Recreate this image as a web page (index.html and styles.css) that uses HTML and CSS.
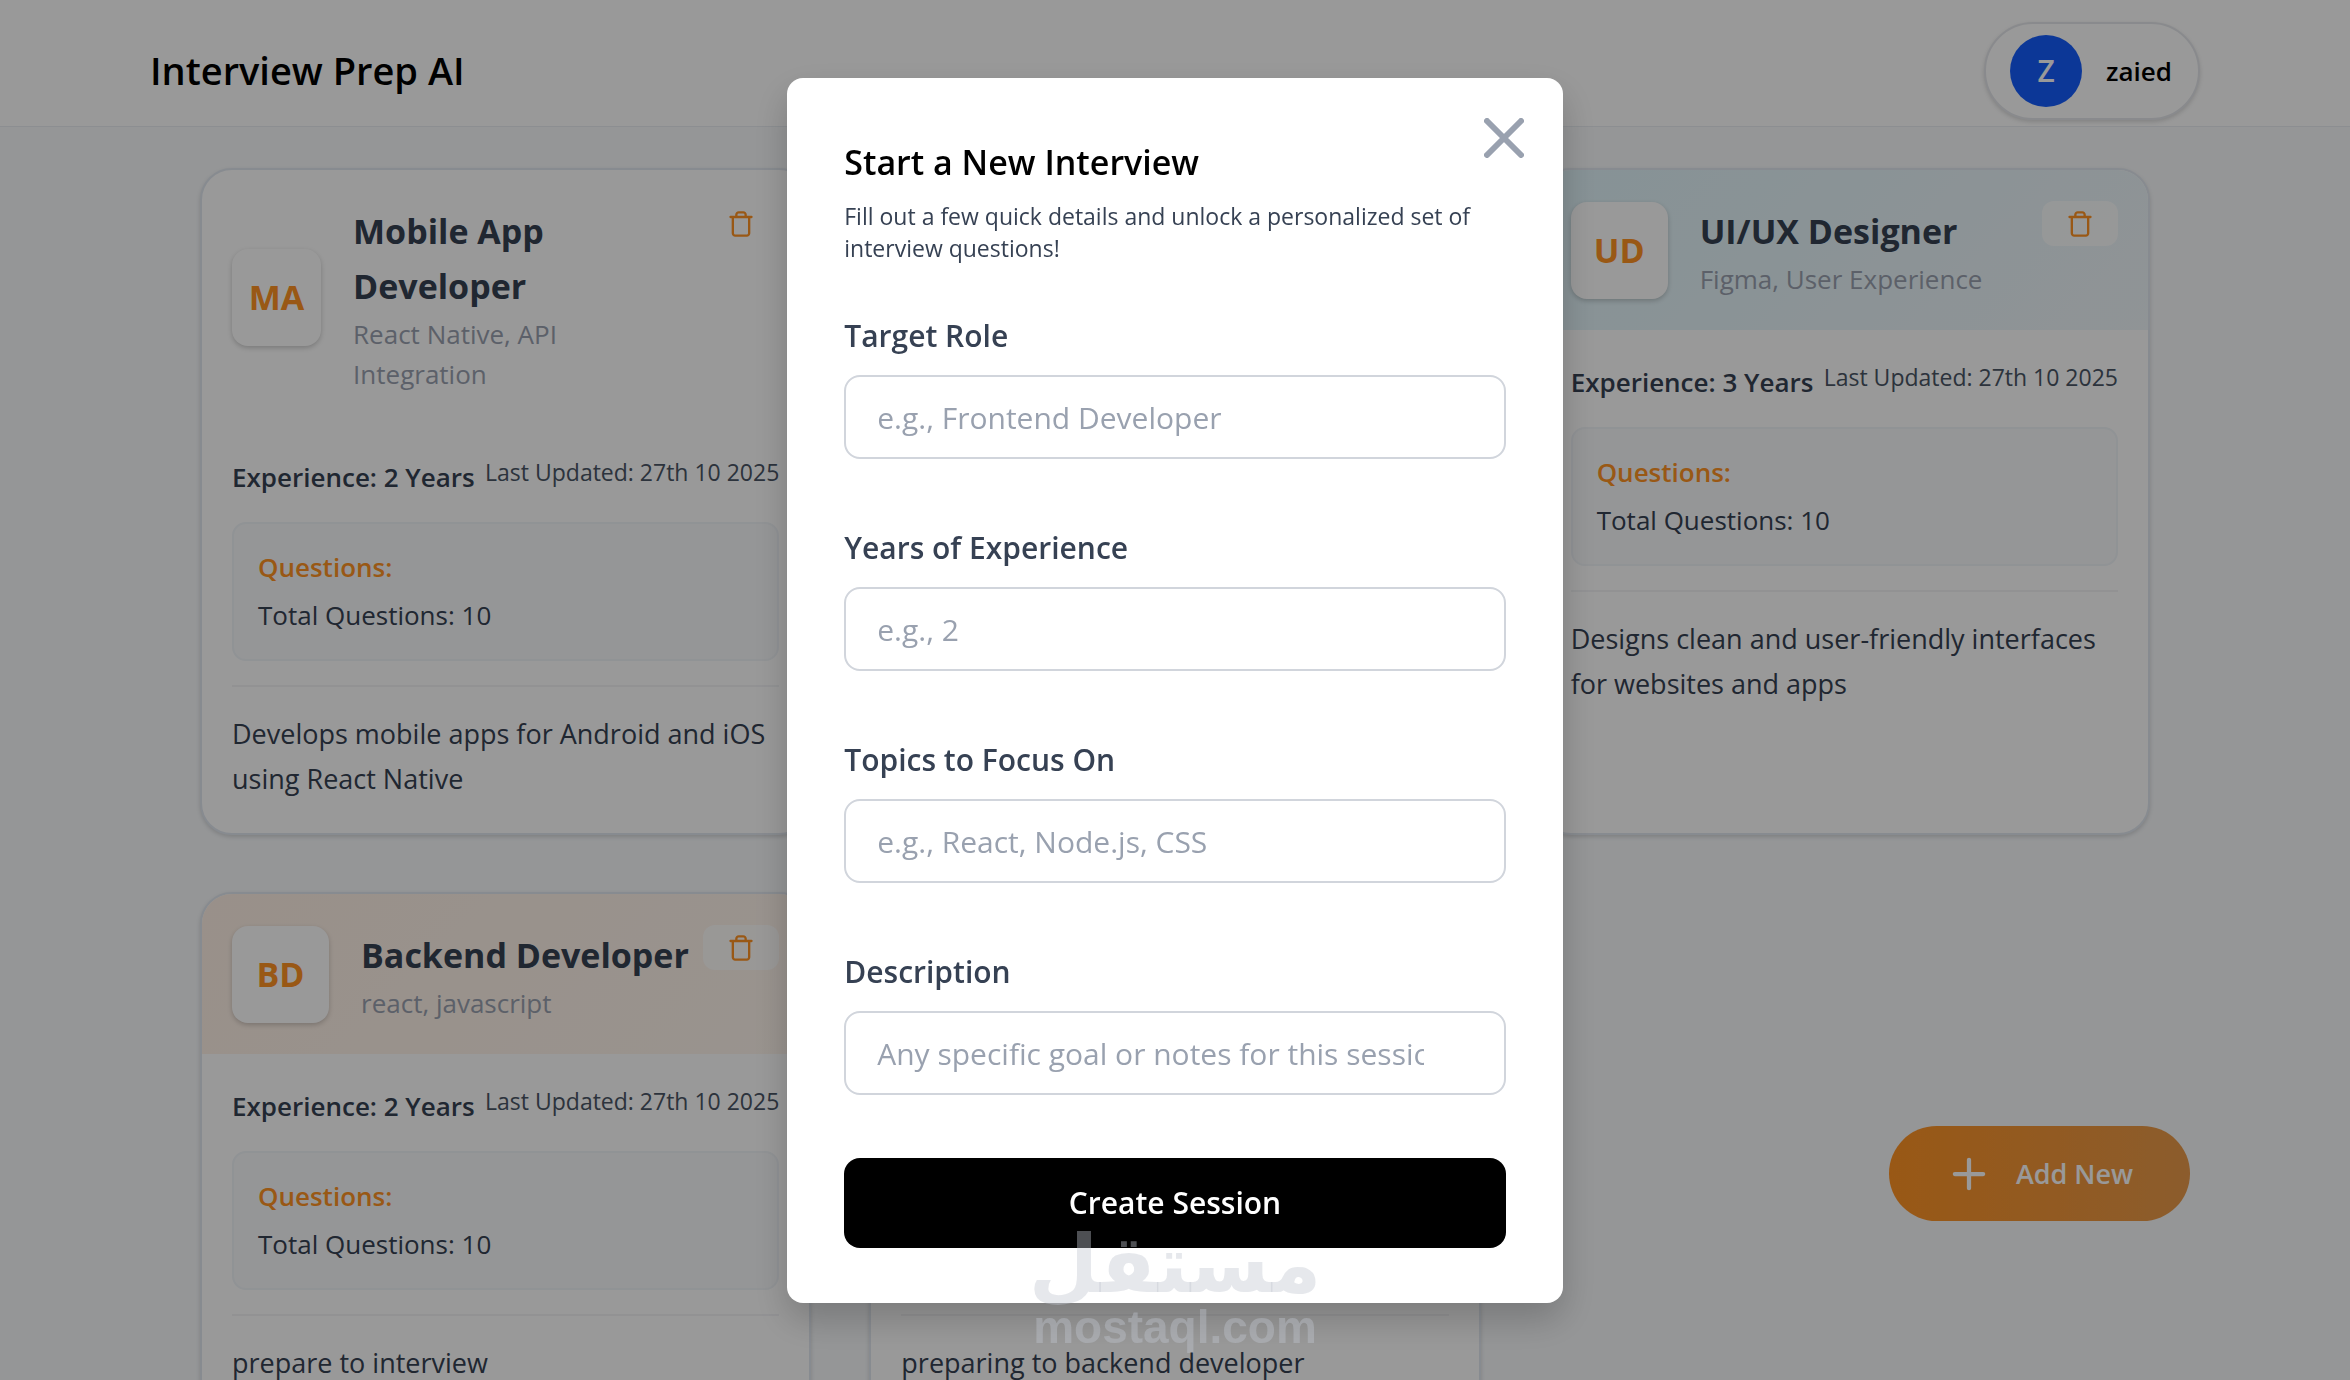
FILE: index.html
```html
<!DOCTYPE html>
<html lang="en">
<head>
    <meta charset="UTF-8">
    <meta name="viewport" content="width=device-width, initial-scale=1.0">
    <title>Interview Prep AI</title>
    <link rel="stylesheet" href="styles.css">
</head>
<body>

    <svg class="sprite" aria-hidden="true">
        <symbol id="icon-trash" viewBox="0 0 24 24">
            <path d="M3 6h18M19 6v14c0 1-1 2-2 2H7c-1 0-2-1-2-2V6M8 6V4c0-1 1-2 2-2h4c1 0 2 1 2 2v2"/>
        </symbol>
    </svg>

    <header class="navbar">
        <a href="#" class="brand">Interview Prep AI</a>
        <button type="button" class="profile">
            <span class="avatar">Z</span>
            <span class="username">zaied</span>
        </button>
    </header>

    <main class="dashboard">
        <article class="card">
            <div class="card-header">
                <div class="initials">MA</div>
                <div class="card-title">
                    <h2>Mobile App Developer</h2>
                    <p>React Native, API Integration</p>
                </div>
                <button type="button" class="delete-btn" aria-label="Delete"><svg><use href="#icon-trash"/></svg></button>
            </div>
            <div class="card-body">
                <div class="meta">
                    <span class="experience">Experience: 2 Years</span>
                    <span class="updated">Last Updated: 27th 10 2025</span>
                </div>
                <div class="questions">
                    <h3>Questions:</h3>
                    <p>Total Questions: 10</p>
                </div>
                <p class="description">Develops mobile apps for Android and iOS using React Native</p>
            </div>
        </article>

        <article class="card"></article>

        <article class="card">
            <div class="card-header blue">
                <div class="initials">UD</div>
                <div class="card-title">
                    <h2>UI/UX Designer</h2>
                    <p>Figma, User Experience</p>
                </div>
                <button type="button" class="delete-btn" aria-label="Delete"><svg><use href="#icon-trash"/></svg></button>
            </div>
            <div class="card-body">
                <div class="meta">
                    <span class="experience">Experience: 3 Years</span>
                    <span class="updated">Last Updated: 27th 10 2025</span>
                </div>
                <div class="questions">
                    <h3>Questions:</h3>
                    <p>Total Questions: 10</p>
                </div>
                <p class="description">Designs clean and user-friendly interfaces for websites and apps</p>
            </div>
        </article>

        <article class="card">
            <div class="card-header peach">
                <div class="initials">BD</div>
                <div class="card-title">
                    <h2>Backend Developer</h2>
                    <p>react, javascript</p>
                </div>
                <button type="button" class="delete-btn" aria-label="Delete"><svg><use href="#icon-trash"/></svg></button>
            </div>
            <div class="card-body">
                <div class="meta">
                    <span class="experience">Experience: 2 Years</span>
                    <span class="updated">Last Updated: 27th 10 2025</span>
                </div>
                <div class="questions">
                    <h3>Questions:</h3>
                    <p>Total Questions: 10</p>
                </div>
                <p class="description">prepare to interview</p>
            </div>
        </article>

        <article class="card">
            <div class="card-header">
                <div class="initials">BD</div>
                <div class="card-title">
                    <h2>Backend Developer</h2>
                    <p>react, javascript</p>
                </div>
                <button type="button" class="delete-btn" aria-label="Delete"><svg><use href="#icon-trash"/></svg></button>
            </div>
            <div class="card-body">
                <div class="meta">
                    <span class="experience">Experience: 2 Years</span>
                    <span class="updated">Last Updated: 27th 10 2025</span>
                </div>
                <div class="questions">
                    <h3>Questions:</h3>
                    <p>Total Questions: 10</p>
                </div>
                <p class="description">preparing to backend developer</p>
            </div>
        </article>
    </main>

    <button type="button" class="add-btn">
        <svg viewBox="0 0 24 24" aria-hidden="true"><path d="M12 2v20M2 12h20"/></svg>
        Add New
    </button>

    <div class="overlay">
        <div class="modal" role="dialog" aria-labelledby="modalTitle">
            <button type="button" class="close-btn" aria-label="Close">
                <svg viewBox="0 0 40 40" aria-hidden="true"><path d="M3 3l34 34M37 3L3 37"/></svg>
            </button>
            <h2 id="modalTitle">Start a New Interview</h2>
            <p class="intro">Fill out a few quick details and unlock a personalized set of interview questions!</p>

            <form id="sessionForm">
                <div class="fields">
                    <div class="field">
                        <label for="role">Target Role</label>
                        <div class="input-box">
                            <input type="text" id="role" name="role" placeholder="e.g., Frontend Developer">
                        </div>
                    </div>
                    <div class="field">
                        <label for="experience">Years of Experience</label>
                        <div class="input-box">
                            <input type="text" id="experience" name="experience" placeholder="e.g., 2">
                        </div>
                    </div>
                    <div class="field">
                        <label for="topics">Topics to Focus On</label>
                        <div class="input-box">
                            <input type="text" id="topics" name="topics" placeholder="e.g., React, Node.js, CSS">
                        </div>
                    </div>
                    <div class="field">
                        <label for="description">Description</label>
                        <div class="input-box">
                            <input type="text" id="description" name="description" placeholder="Any specific goal or notes for this session">
                        </div>
                    </div>
                </div>
                <button type="submit" class="submit-btn">Create Session</button>
            </form>
        </div>
    </div>

    <div class="watermark">
        <span class="watermark-ar" lang="ar">مستقل</span>
        <span class="watermark-en">mostaql.com</span>
    </div>

</body>
</html>
```

FILE: styles.css
```css
* {
    box-sizing: border-box;
}
body {
    font-family: "Open Sans", "Noto Sans", sans-serif;
    margin: 0;
    background-color: #f8fafc;
    color: #364153;
    font-size: 26px;
    line-height: 45px;
    height: 100vh;
    overflow: hidden;
}
h2, h3, p {
    margin: 0;
}
button {
    font-family: inherit;
    border: none;
    padding: 0;
    cursor: pointer;
}
svg {
    fill: none;
    stroke: currentColor;
    stroke-width: 2;
    stroke-linecap: round;
    stroke-linejoin: round;
}
.sprite {
    display: none;
}

/* Navbar */
.navbar {
    display: flex;
    justify-content: space-between;
    align-items: center;
    height: 127px;
    padding: 15px 150px 0;
    background-color: #fff;
    border-bottom: 1px solid #e9edf2;
}
.brand {
    font-size: 38px;
    font-weight: 600;
    color: #000;
    text-decoration: none;
}
.profile {
    display: flex;
    align-items: center;
    gap: 24px;
    height: 98px;
    padding: 0 26px 0 24px;
    background-color: #fff;
    border: 2px solid #e5e7eb;
    border-radius: 50px;
    box-shadow: 0 2px 4px rgba(0, 0, 0, 0.15);
}
.avatar {
    display: flex;
    align-items: center;
    justify-content: center;
    width: 72px;
    height: 72px;
    border-radius: 50%;
    background-color: #155dfc;
    color: #fff;
    font-size: 30px;
    font-weight: 600;
}
.username {
    font-size: 26px;
    font-weight: 600;
    color: #000;
}

/* Cards */
.dashboard {
    display: grid;
    grid-template-columns: repeat(3, 1fr);
    gap: 57px 58px;
    padding: 41px 200px;
}
.card {
    background-color: #fff;
    border: 2px solid #e2e8f0;
    border-radius: 32px;
    overflow: hidden;
    box-shadow: 0 2px 4px rgba(0, 0, 0, 0.15);
}
.card-header {
    position: relative;
    display: flex;
    align-items: center;
    gap: 32px;
    padding: 31px 114px 31px 30px;
}
.card-header.blue {
    background: linear-gradient(135deg, #e0f4fa, #f0f7fa);
}
.card-header.peach {
    background: linear-gradient(135deg, #fff1e6, #fff6ee);
}
.initials {
    display: flex;
    align-items: center;
    justify-content: center;
    width: 97px;
    height: 97px;
    border-radius: 16px;
    background-color: #fff;
    box-shadow: 0 2px 5px rgba(0, 0, 0, 0.2);
    color: #ff9324;
    font-size: 34px;
    font-weight: 700;
}
.card-title {
    padding-top: 3px;
}
.card-title h2 {
    font-size: 34px;
    font-weight: 700;
    line-height: 55px;
}
.card-title p {
    line-height: 40px;
    color: #99a1af;
}
.delete-btn {
    position: absolute;
    top: 31px;
    right: 30px;
    display: flex;
    align-items: center;
    justify-content: center;
    width: 76px;
    height: 45px;
    border-radius: 12px;
    background-color: rgba(255, 255, 255, 0.8);
    color: #ff9324;
}
.delete-btn svg {
    width: 28px;
    height: 28px;
}
.card-body {
    padding: 31px 30px 32px;
}
.meta {
    display: flex;
    justify-content: space-between;
    align-items: flex-start;
    margin-bottom: 24px;
    white-space: nowrap;
}
.experience {
    font-weight: 600;
    line-height: 42px;
}
.updated {
    font-size: 23px;
    line-height: 32px;
    color: #4a5565;
}
.questions {
    padding: 21px 24px;
    margin-bottom: 24px;
    background-color: #f8fafc;
    border: 2px solid #f1f5f9;
    border-radius: 14px;
}
.questions h3 {
    font-size: 26px;
    font-weight: 600;
    color: #ff9324;
    margin-bottom: 3px;
}
.description {
    padding-top: 24px;
    border-top: 2px solid #f3f4f6;
    font-size: 27px;
}

.add-btn {
    position: fixed;
    right: 160px;
    bottom: 159px;
    display: flex;
    align-items: center;
    justify-content: center;
    gap: 30px;
    width: 301px;
    height: 95px;
    padding-left: 6px;
    border-radius: 48px;
    background: linear-gradient(to right, #ff9324, #e99a4b);
    color: #fff;
    font-size: 27px;
    font-weight: 600;
}
.add-btn svg {
    width: 34px;
    height: 34px;
    stroke-width: 3;
}

/* Modal */
.overlay {
    position: fixed;
    inset: 0;
    display: flex;
    align-items: center;
    justify-content: center;
    background-color: rgba(0, 0, 0, 0.4);
}
.modal {
    position: relative;
    width: 33vw;
    min-width: 560px;
    padding: 57px 57px 55px;
    background-color: #fff;
    border-radius: 16px;
    box-shadow: 0 16px 36px rgba(0, 0, 0, 0.2);
}
.close-btn {
    position: absolute;
    top: 40px;
    right: 39px;
    background: none;
    color: #99a1af;
}
.close-btn svg {
    display: block;
    width: 40px;
    height: 40px;
    stroke-width: 6;
}
.modal h2 {
    font-size: 34px;
    font-weight: 600;
    line-height: 54px;
    color: #000;
    margin-bottom: 11px;
}
.intro {
    font-size: 23px;
    line-height: 32px;
    margin-bottom: 49px;
}
.fields {
    display: flex;
    flex-direction: column;
    gap: 66px;
    margin-bottom: 63px;
}
.field label {
    display: block;
    font-size: 30px;
    font-weight: 600;
    line-height: 46px;
    margin-bottom: 16px;
}
.input-box {
    height: 84px;
    padding: 2px 80px 0 31px;
    border: 2px solid #d1d5dc;
    border-radius: 16px;
}
.input-box input {
    width: 100%;
    height: 100%;
    padding: 0;
    border: none;
    outline: none;
    background: none;
    font-family: inherit;
    font-size: 30px;
}
.input-box input::placeholder {
    color: #99a1af;
}
.submit-btn {
    display: block;
    width: 100%;
    height: 90px;
    border-radius: 16px;
    background-color: #000;
    color: #fff;
    font-size: 30px;
    font-weight: 600;
}

/* Watermark */
.watermark {
    position: fixed;
    left: 0;
    right: 0;
    bottom: 31px;
    display: flex;
    flex-direction: column;
    align-items: center;
    color: rgba(192, 197, 208, 0.4);
    font-weight: 700;
    pointer-events: none;
}
.watermark-ar {
    font-family: "DejaVu Sans", sans-serif;
    font-size: 80px;
    line-height: 80px;
}
.watermark-en {
    font-family: "Liberation Sans", sans-serif;
    font-size: 46px;
    line-height: 44px;
}
```
